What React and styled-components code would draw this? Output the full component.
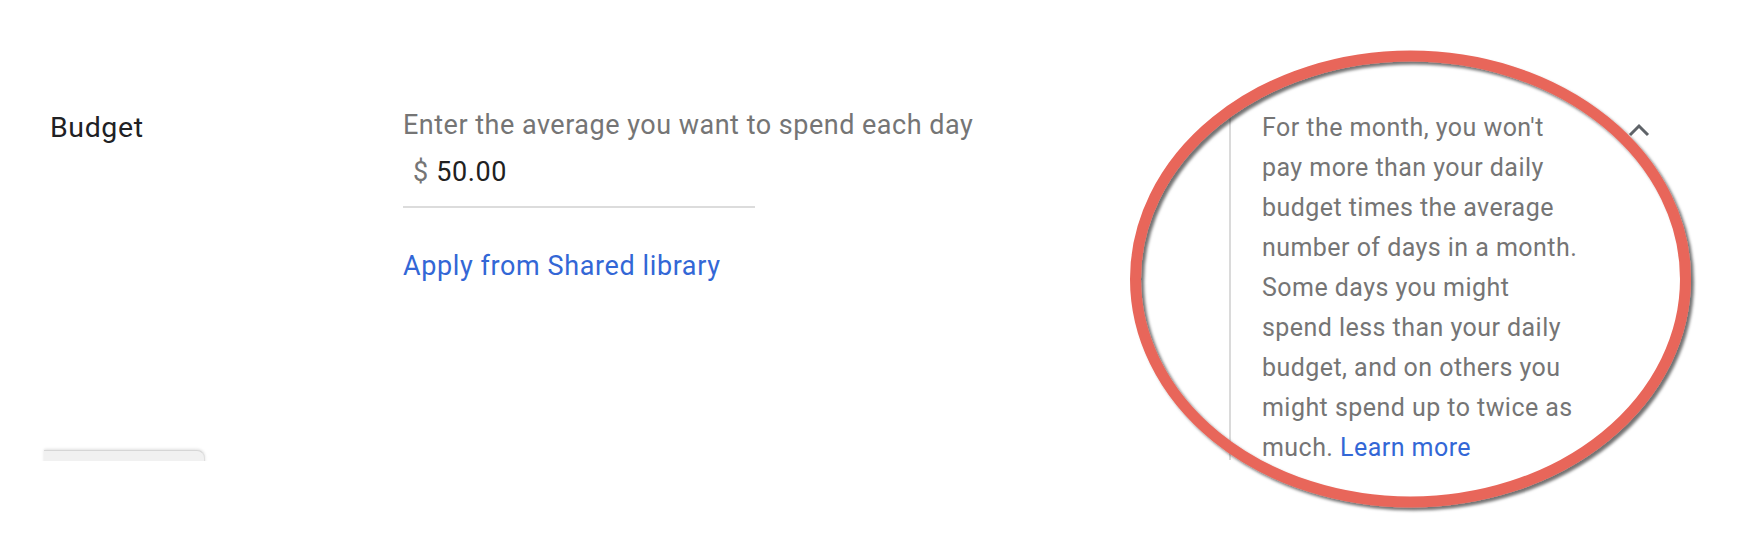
import React from 'react';
import styled, { createGlobalStyle } from 'styled-components';

const Global = createGlobalStyle`
html, body {
  margin: 0;
  padding: 0;
  background: #fff;
}
body {
  font-family: Roboto, "Noto Sans", sans-serif;
  -webkit-font-smoothing: antialiased;
}
`

const Page = styled.div`
position: relative;
width: 1738px;
height: 559px;
overflow: hidden;
`

const Card = styled.div`
height: 461px;
overflow: hidden;
display: flex;
flex-direction: column;
`

const Row = styled.div`
display: flex;
align-items: flex-start;
padding-top: 108px;
margin-bottom: -10px;
flex: 1 1 0;
min-height: 0;
`

const Label = styled.div`
width: 403px;
padding-left: 50px;
padding-top: 3px;
font-size: 28.5px;
letter-spacing: 0.6px;
color: #202124;
flex-shrink: 0;
box-sizing: border-box;
`

const Field = styled.div`
width: 826px;
flex-shrink: 0;
padding-top: 1px;
`

const Hint = styled.div`
font-size: 27px;
letter-spacing: 0.5px;
color: #757575;
`

const InputBox = styled.div`
width: 352px;
display: flex;
align-items: baseline;
gap: 8px;
padding: 15px 0 18px 10px;
border-bottom: 2px solid #dcdcdc;
box-sizing: border-box;
`

const Currency = styled.span`
font-size: 27px;
color: #757575;
`

const Amount = styled.span`
font-size: 27px;
letter-spacing: 0.6px;
color: #212121;
`

const Link = styled.a`
display: inline-block;
margin-top: 42px;
font-size: 27px;
letter-spacing: 0.6px;
color: #3367d6;
text-decoration: none;
`

const Help = styled.div`
width: 354px;
align-self: stretch;
border-left: 2px solid #dadada;
padding-left: 31px;
box-sizing: border-box;
font-size: 25px;
letter-spacing: 0.45px;
line-height: 40px;
color: #757575;
`

const HelpLink = styled.a`
color: #3367d6;
text-decoration: none;
`

const Toggle = styled.div`
margin-left: 45px;
padding-top: 14px;
`

const Tab = styled.div`
margin-left: 44px;
width: 160px;
height: 40px;
background: #f1f1f1;
border-top: 1px solid #d6d6d6;
border-right: 1px solid #e0e0e0;
border-top-right-radius: 8px;
box-shadow: 0 -1px 3px rgba(0,0,0,.12);
flex-shrink: 0;
margin-bottom: -30px;
position: relative;
`

const Annotation = styled.svg`
position: absolute;
left: 1120px;
top: 40px;
overflow: visible;
`

const App = () => {
    return (
        <Page>
            <Global />
            <Card>
                <Row>
                    <Label>Budget</Label>
                    <Field>
                        <Hint>Enter the average you want to spend each day</Hint>
                        <InputBox>
                            <Currency>$</Currency>
                            <Amount>50.00</Amount>
                        </InputBox>
                        <Link href="#">Apply from Shared library</Link>
                    </Field>
                    <Help>
                        For the month, you won't pay more than your daily budget times the average number of days in a month. Some days you might spend less than your daily budget, and on others you might spend up to twice as much. <HelpLink href="#">Learn more</HelpLink>
                    </Help>
                    <Toggle>
                        <svg width="22" height="14" viewBox="0 0 22 14">
                            <polyline points="2,12 11,3 20,12" fill="none" stroke="#5f6368" strokeWidth="3" />
                        </svg>
                    </Toggle>
                </Row>
                <Tab />
            </Card>
            <Annotation width="580" height="480">
                <defs>
                    <filter id="sh" x="-10%" y="-10%" width="120%" height="120%">
                        <feDropShadow dx="3" dy="3" stdDeviation="1.5" floodColor="#000" floodOpacity="0.55" />
                    </filter>
                </defs>
                <ellipse cx="290.5" cy="239" rx="275" ry="223" fill="none" stroke="#e8665a" strokeWidth="11" filter="url(#sh)" />
            </Annotation>
        </Page>
    );
}

export default App;
